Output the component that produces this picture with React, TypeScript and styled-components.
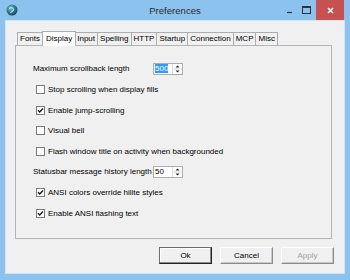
import * as React from 'react';
import styled, { createGlobalStyle } from 'styled-components';

const GlobalStyle = createGlobalStyle`
  html, body {
    margin: 0;
    padding: 0;
    width: 350px;
    height: 280px;
    overflow: hidden;
  }
  body {
    font-family: 'Liberation Sans', Arial, sans-serif;
    font-size: 8px;
    color: #000;
  }
`;

const Window = styled.div`
  width: 350px;
  height: 280px;
  background: #8cc2ee;
  display: flex;
  flex-direction: column;
`;

const TitleBar = styled.header`
  height: 20px;
  display: grid;
  grid-template-columns: 1fr auto 1fr;
  align-items: start;
`;

const AppIcon = styled.svg`
  width: 12px;
  height: 12px;
  margin: 4px 0 0 6px;
`;

const Title = styled.h1`
  margin: 0;
  font-size: 9.6px;
  font-weight: normal;
  line-height: 21px;
  color: #2d2d2d;
`;

const Controls = styled.div`
  display: flex;
  justify-content: flex-end;
  gap: 3px;
  margin-right: 6px;
`;

const CaptionButton = styled.div<{ $close?: boolean }>`
  width: ${p => (p.$close ? 28 : 14)}px;
  height: 20px;
  display: flex;
  align-items: center;
  justify-content: center;
  background: ${p => (p.$close ? '#c75050' : 'transparent')};
`;

const Client = styled.div`
  flex: 1;
  margin: 0 5px 6px 5px;
  border: 1px solid #cfe4f6;
  background: #f0f0f0;
  padding: 10px 10px 0 9px;
  display: flex;
  flex-direction: column;
`;

const TabStrip = styled.nav`
  display: flex;
  align-items: flex-end;
  height: 14px;
  padding-left: 2px;
  margin-right: 2px;
`;

const Tab = styled.div<{ $active?: boolean }>`
  position: relative;
  height: ${p => (p.$active ? 15 : 13)}px;
  margin: 0 ${p => (p.$active ? -1 : 0)}px ${p => (p.$active ? -1 : 0)}px -1px;
  padding: 0 ${p => (p.$active ? 3 : 2)}px;
  box-sizing: border-box;
  border: 1px solid #adadad;
  border-bottom: none;
  background: ${p => (p.$active ? '#ffffff' : '#f0f0f0')};
  z-index: ${p => (p.$active ? 2 : 1)};
  line-height: ${p => (p.$active ? 13 : 12)}px;
  white-space: nowrap;
  &:first-child {
    margin-left: 0;
  }
`;

const Pane = styled.section`
  height: 194px;
  box-sizing: border-box;
  border: 1px solid #b4b4b4;
  margin-right: 2px;
  padding: 12.7px 0 0 17px;
  display: flex;
  flex-direction: column;
`;

const Row = styled.div<{ $indent?: boolean }>`
  height: 20.6px;
  display: flex;
  align-items: center;
  padding-left: ${p => (p.$indent ? 3 : 0)}px;
  white-space: nowrap;
`;

const Label = styled.span`
  width: 120px;
`;

const Box = styled.span`
  width: 9px;
  height: 9px;
  box-sizing: border-box;
  border: 1px solid #7a7a7a;
  background: #fff;
  margin-right: 3px;
  display: flex;
  align-items: center;
  justify-content: center;
`;

const Spin = styled.div`
  width: 30px;
  height: 12px;
  box-sizing: border-box;
  border: 1px solid #abadb3;
  background: #fff;
  display: flex;
`;

const SpinValue = styled.div`
  flex: 1;
  padding-left: 1px;
  line-height: 10px;
`;

const Selected = styled.span`
  background: #3399ff;
  color: #fff;
`;

const SpinArrows = styled.svg`
  width: 10px;
  height: 10px;
`;

const ButtonRow = styled.footer`
  display: flex;
  justify-content: flex-end;
  gap: 8px;
  margin-top: 8px;
`;

const Button = styled.div<{ $primary?: boolean; $disabled?: boolean }>`
  width: 53px;
  height: 17px;
  box-sizing: border-box;
  display: flex;
  align-items: center;
  justify-content: center;
  background: #f0f0f0;
  color: ${p => (p.$disabled ? '#a0a0a0' : '#000')};
  border: 1px solid;
  border-color: ${p =>
    p.$primary ? '#6d6d6d #222 #222 #6d6d6d' : '#ffffff #8a8a8a #8a8a8a #ffffff'};
  box-shadow: ${p =>
    p.$primary ? 'inset -1px -1px #8a8a8a, inset 1px 1px #fff' : 'inset -1px -1px #c8c8c8'};
`;

const Check = () => (
  <svg width="7" height="7" viewBox="0 0 7 7">
    <path d="M1 3.3 L2.7 5 L6 1.5" fill="none" stroke="#1a1a1a" strokeWidth="1.4" />
  </svg>
);

const CheckRow: React.FC<{ checked?: boolean; children: React.ReactNode }> = ({
  checked,
  children,
}) => (
  <Row $indent>
    <Box>{checked && <Check />}</Box>
    {children}
  </Row>
);

const SpinBox: React.FC<{ value: string; selected?: boolean }> = ({ value, selected }) => (
  <Spin>
    <SpinValue>{selected ? <Selected>{value}</Selected> : value}</SpinValue>
    <SpinArrows viewBox="0 0 10 10">
      <line x1="0.5" y1="0" x2="0.5" y2="10" stroke="#dadada" />
      <line x1="1" y1="5" x2="10" y2="5" stroke="#dadada" />
      <path d="M3.5 3.5 L5.5 1.5 L7.5 3.5 Z" fill="#222" />
      <path d="M3.5 6.5 L5.5 8.5 L7.5 6.5 Z" fill="#222" />
    </SpinArrows>
  </Spin>
);

const tabs = ['Fonts', 'Display', 'Input', 'Spelling', 'HTTP', 'Startup', 'Connection', 'MCP', 'Misc'];

const App: React.FC = () => {
  return (
    <>
      <GlobalStyle />
      <Window>
        <TitleBar>
          <AppIcon viewBox="0 0 12 12">
            <defs>
              <radialGradient id="g" cx="0.4" cy="0.35" r="0.7">
                <stop offset="0" stopColor="#7cc7d4" />
                <stop offset="0.6" stopColor="#2a7387" />
                <stop offset="1" stopColor="#163f4d" />
              </radialGradient>
            </defs>
            <circle cx="6" cy="6" r="5.5" fill="url(#g)" />
            <path d="M3 4.5 C5 3 8 4 7.5 6 C7 8 4.5 7.5 4.5 9" fill="none" stroke="#e8f6f8" strokeWidth="1" />
          </AppIcon>
          <Title>Preferences</Title>
          <Controls>
            <CaptionButton>
              <svg width="7" height="7" viewBox="0 0 7 7">
                <line x1="1" y1="5.5" x2="6" y2="5.5" stroke="#333" strokeWidth="1.2" />
              </svg>
            </CaptionButton>
            <CaptionButton>
              <svg width="9" height="8" viewBox="0 0 9 8">
                <rect x="0.5" y="0.5" width="8" height="7" fill="none" stroke="#333" />
                <line x1="0.5" y1="1.5" x2="8.5" y2="1.5" stroke="#333" />
              </svg>
            </CaptionButton>
            <CaptionButton $close>
              <svg width="7" height="7" viewBox="0 0 7 7">
                <path d="M1 1 L6 6 M6 1 L1 6" stroke="#fff" strokeWidth="1.5" />
              </svg>
            </CaptionButton>
          </Controls>
        </TitleBar>
        <Client>
          <TabStrip>
            {tabs.map(t => (
              <Tab key={t} $active={t === 'Display'}>
                {t}
              </Tab>
            ))}
          </TabStrip>
          <Pane>
            <Row>
              <Label>Maximum scrollback length</Label>
              <SpinBox value="500" selected />
            </Row>
            <CheckRow>Stop scrolling when display fills</CheckRow>
            <CheckRow checked>Enable jump-scrolling</CheckRow>
            <CheckRow>Visual bell</CheckRow>
            <CheckRow>Flash window title on activity when backgrounded</CheckRow>
            <Row>
              <Label>Statusbar message history length</Label>
              <SpinBox value="50" />
            </Row>
            <CheckRow checked>ANSI colors override hilite styles</CheckRow>
            <CheckRow checked>Enable ANSI flashing text</CheckRow>
          </Pane>
          <ButtonRow>
            <Button $primary>Ok</Button>
            <Button>Cancel</Button>
            <Button $disabled>Apply</Button>
          </ButtonRow>
        </Client>
      </Window>
    </>
  );
};

export default App;
